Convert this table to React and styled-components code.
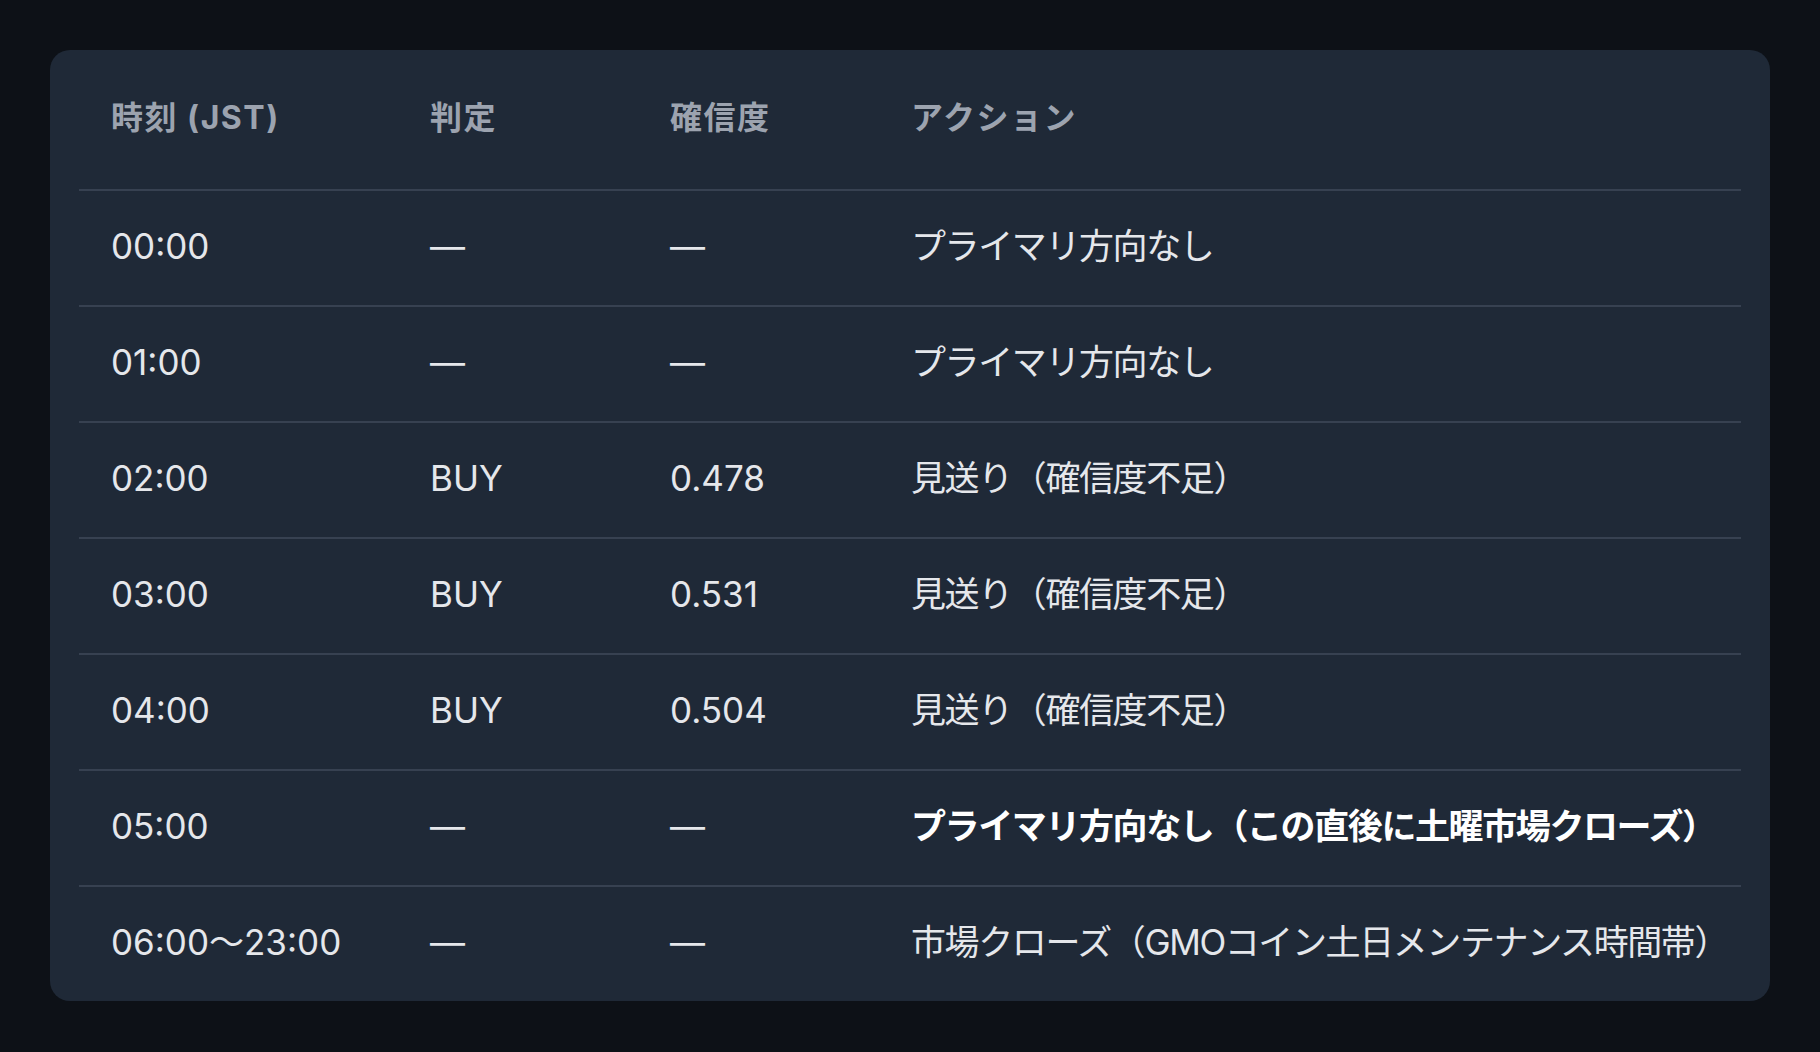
import React from "react";
import styled, { createGlobalStyle } from "styled-components";

const Global = createGlobalStyle`
  html, body { margin: 0; padding: 0; background: #0d1117; }
  body {
    font-family: Inter, "Noto Sans CJK JP", "Noto Sans", sans-serif;
    -webkit-font-smoothing: antialiased;
  }
`;

const Page = styled.div`
  min-height: 1052px;
  padding: 50px;
  box-sizing: border-box;
  background: #0d1117;
`;

const Card = styled.div`
  background: #1f2937;
  border-radius: 20px;
  padding: 0 29px;
`;

const Row = styled.div`
  display: grid;
  grid-template-columns: 319px 240px 241px 1fr;
  border-top: ${(p) => (p.$head ? "none" : "2px solid #374151")};
`;

const HeadCell = styled.div`
  padding: 43px 32px 47px;
  font-size: 32px;
  line-height: 49px;
  font-weight: 700;
  letter-spacing: 1.5px;
  color: #9ca3af;
  white-space: nowrap;
`;

const Cell = styled.div`
  padding: 30px 32px 34px;
  font-size: 35px;
  line-height: 50px;
  color: ${(p) => (p.$strong ? "#ffffff" : "#e5e7eb")};
  font-weight: ${(p) => (p.$strong ? 700 : 400)};
  letter-spacing: ${(p) => (p.$cjk ? "-1.4px" : "0")};
  white-space: nowrap;
`;

const rows = [
  { t: "00:00", d: "—", c: "—", a: "プライマリ方向なし" },
  { t: "01:00", d: "—", c: "—", a: "プライマリ方向なし" },
  { t: "02:00", d: "BUY", c: "0.478", a: "見送り（確信度不足）" },
  { t: "03:00", d: "BUY", c: "0.531", a: "見送り（確信度不足）" },
  { t: "04:00", d: "BUY", c: "0.504", a: "見送り（確信度不足）" },
  { t: "05:00", d: "—", c: "—", a: "プライマリ方向なし（この直後に土曜市場クローズ）", strong: true },
  { t: "06:00〜23:00", d: "—", c: "—", a: "市場クローズ（GMOコイン土日メンテナンス時間帯）" },
];

export default function App() {
  return (
    <>
      <Global />
      <Page>
        <Card>
          <Row $head>
            <HeadCell>時刻 (JST)</HeadCell>
            <HeadCell>判定</HeadCell>
            <HeadCell>確信度</HeadCell>
            <HeadCell>アクション</HeadCell>
          </Row>
          {rows.map((r) => (
            <Row key={r.t}>
              <Cell>{r.t}</Cell>
              <Cell>{r.d}</Cell>
              <Cell>{r.c}</Cell>
              <Cell $cjk $strong={r.strong}>{r.a}</Cell>
            </Row>
          ))}
        </Card>
      </Page>
    </>
  );
}
